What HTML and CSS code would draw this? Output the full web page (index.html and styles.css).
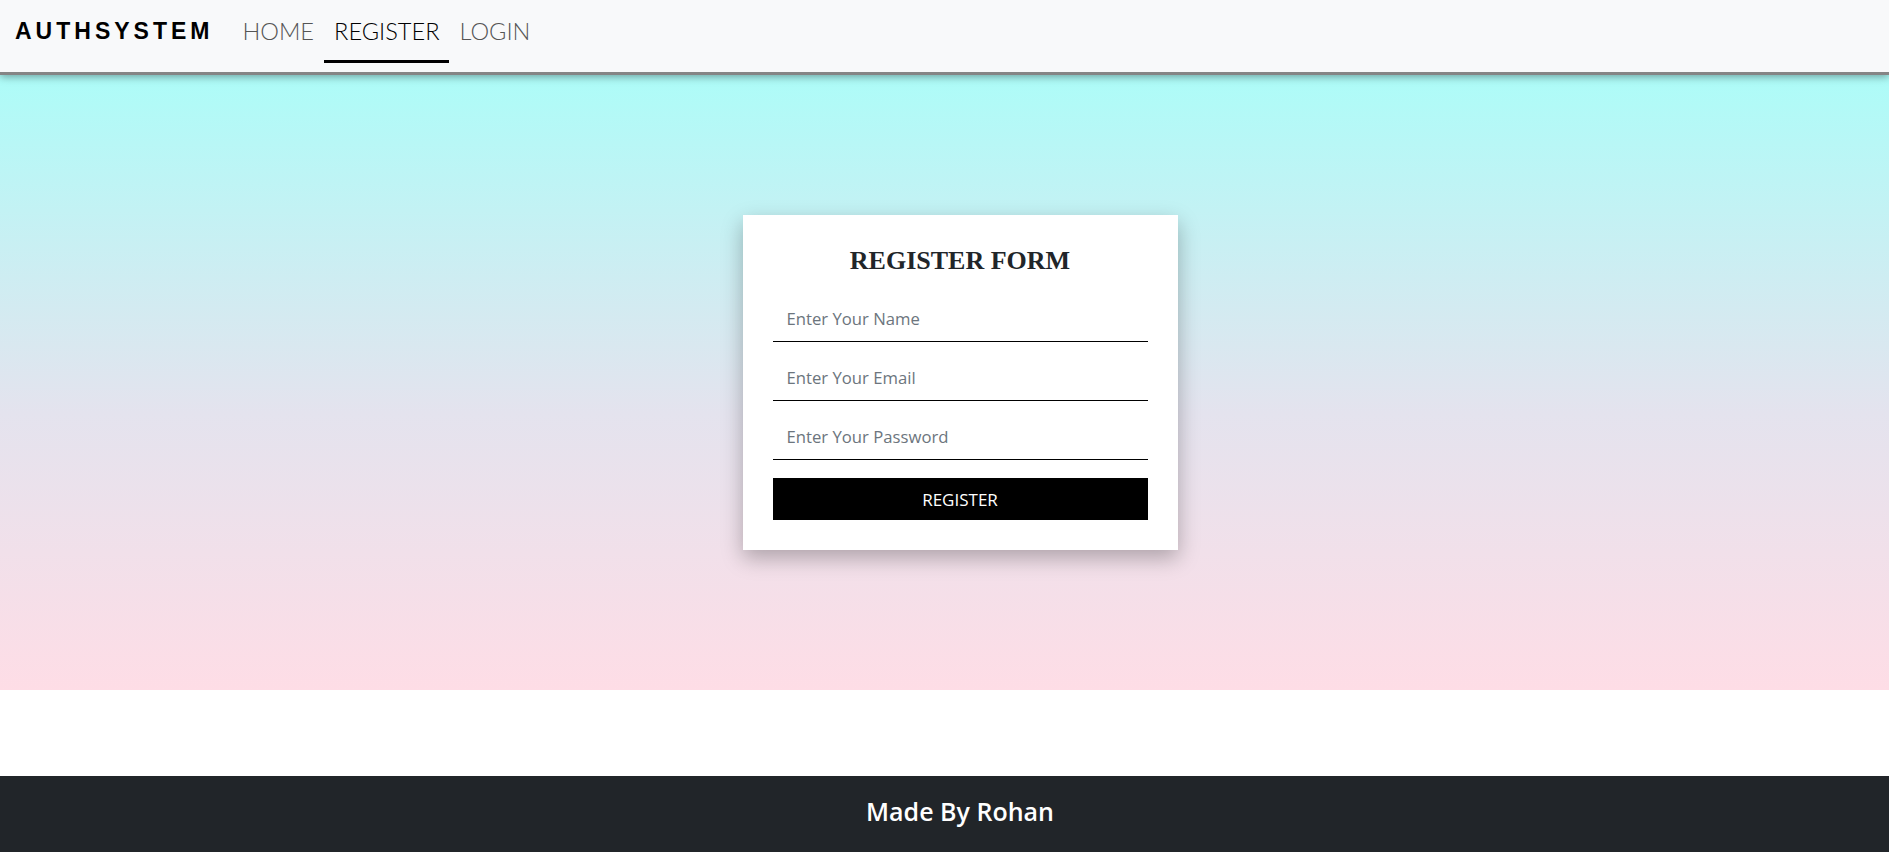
FILE: index.html
```html
<!DOCTYPE html>
<html lang="en">
<head>
<meta charset="utf-8">
<title>AuthSystem - Register</title>
<link rel="stylesheet" href="styles.css">
</head>
<body>
<nav class="navbar">
  <a class="brand" href="#">AUTHSYSTEM</a>
  <ul class="nav-links">
    <li><a class="nav-link" href="#">HOME</a></li>
    <li><a class="nav-link active" href="#">REGISTER</a></li>
    <li><a class="nav-link" href="#">LOGIN</a></li>
  </ul>
</nav>
<main class="hero">
  <form class="card">
    <h2 class="card-title">REGISTER FORM</h2>
    <input class="field" type="text" placeholder="Enter Your Name">
    <input class="field" type="email" placeholder="Enter Your Email">
    <input class="field" type="password" placeholder="Enter Your Password">
    <button class="submit" type="button">REGISTER</button>
  </form>
</main>
<div class="spacer"></div>
<footer class="footer">
  <p class="footer-text">Made By Rohan</p>
</footer>
</body>
</html>
```
FILE: styles.css
```css
* { box-sizing: border-box; }

html, body {
  height: 852px;
  overflow: hidden;
}

body {
  margin: 0;
  font-family: "Open Sans", "Noto Sans", sans-serif;
  background: #fff;
}

.navbar {
  position: relative;
  z-index: 2;
  display: flex;
  align-items: center;
  height: 75px;
  padding: 0 15px 9px;
  background: #f8f9fa;
  border-bottom: 3px solid #858585;
  box-shadow: 0 2px 8px rgba(0, 0, 0, 0.35);
}

.brand {
  font-family: "Liberation Sans", Arial, sans-serif;
  font-weight: 700;
  font-size: 23px;
  letter-spacing: 4px;
  color: #000;
  text-decoration: none;
  margin-right: 19px;
}

.nav-links {
  display: flex;
  list-style: none;
  margin: 0;
  padding: 0;
}

.nav-link {
  position: relative;
  display: block;
  padding: 0 10px;
  font-family: "Lato", sans-serif;
  font-weight: 300;
  font-size: 23.6px;
  line-height: 29px;
  color: #555;
  text-decoration: none;
}

.nav-link.active {
  color: #000;
}

.nav-link.active::after {
  content: "";
  position: absolute;
  left: 0;
  right: 0;
  bottom: -17px;
  height: 3px;
  background: #000;
}

.hero {
  display: flex;
  justify-content: center;
  align-items: center;
  height: 615px;
  padding-left: 31px;
  background: linear-gradient(to bottom, #adfcf8 0%, #e4e3ee 55%, #fedde6 100%);
}

.card {
  width: 435px;
  padding: 30px;
  background: #fff;
  box-shadow: 0 8px 20px rgba(0, 0, 0, 0.28);
}

.card-title {
  margin: 0 0 19px;
  text-align: center;
  font-family: "Liberation Serif", "Times New Roman", serif;
  font-weight: 700;
  font-size: 26px;
  line-height: 31px;
  color: #212529;
}

.field {
  display: block;
  width: 100%;
  height: 47px;
  margin: 0 0 12px;
  padding: 0 14px;
  border: none;
  border-bottom: 1px solid #000;
  outline: none;
  font-family: "Open Sans", "Noto Sans", sans-serif;
  font-size: 16.7px;
  color: #212529;
  background: #fff;
}

.field::placeholder {
  color: #6c757d;
}

.submit {
  display: block;
  width: 100%;
  height: 42px;
  margin-top: 18px;
  border: none;
  background: #000;
  color: #fff;
  font-family: "Open Sans", "Noto Sans", sans-serif;
  font-size: 17px;
  cursor: pointer;
}

.spacer {
  height: 86px;
}

.footer {
  display: flex;
  justify-content: center;
  align-items: center;
  height: 76px;
  padding: 0 0 6px 31px;
  background: #212529;
}

.footer-text {
  margin: 0;
  color: #fff;
  font-family: "Open Sans", "Noto Sans", sans-serif;
  font-weight: 600;
  font-size: 25px;
}
```
